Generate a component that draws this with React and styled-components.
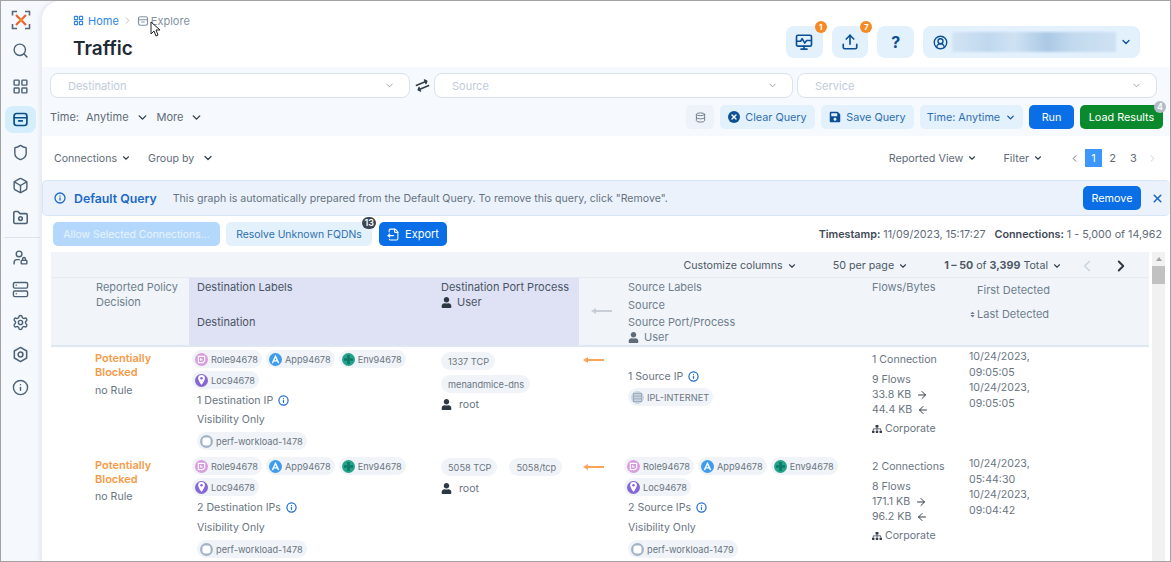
import React from 'react';
import styled, { createGlobalStyle } from 'styled-components';
import {
    Search, LayoutGrid, Shield, Box, Server, Settings, Info, ChevronDown, ChevronLeft, ChevronRight,
    Upload, CircleUserRound, Database, X, FileOutput, ArrowLeft, ArrowRight, UserLock,
} from 'lucide-react';
import { FaSave, FaExchangeAlt, FaUser, FaSitemap, FaSort } from 'react-icons/fa';

const Global = createGlobalStyle`
    html, body { margin: 0; padding: 0; background: #fff; }
    body { font-family: Inter, "Noto Sans", sans-serif; font-size: 11px; color: #5f6b78; }
    * { box-sizing: border-box; }
`

const Frame = styled.div`
    position: relative;
    width: 1171px;
    height: 562px;
    display: flex;
    overflow: hidden;
    border: 1px solid #a3a3a3;
    background: #f5f8fc;
`

const Sidebar = styled.nav`
    width: 41px;
    flex: none;
    display: flex;
    flex-direction: column;
    align-items: center;
    padding-top: 5px;
    color: #4d6276;
`

const NavItem = styled.div`
    width: 31px;
    height: 27px;
    margin-bottom: ${p => p.$gap || 5.5}px;
    margin-left: -2px;
    display: flex;
    align-items: center;
    justify-content: center;
    border-radius: 8px;
    background: ${p => p.$active ? '#d5eefb' : 'transparent'};
    color: ${p => p.$active ? '#0d4f86' : 'inherit'};
`

const NavDivider = styled.div`
    width: 36px;
    height: 1px;
    background: #dde3ea;
    margin: 0 0 6px;
`

const Main = styled.main`
    flex: 1;
    min-width: 0;
    background: #fff;
    border-top-left-radius: 18px;
    box-shadow: -2px 0 4px rgba(70, 90, 120, 0.1);
    display: flex;
    flex-direction: column;
`

const Header = styled.header`
    height: 66px;
    flex: none;
    display: flex;
    justify-content: space-between;
    padding: 12px 30px 0 31px;
`

const Crumbs = styled.div`
    display: flex;
    align-items: center;
    font-size: 11px;
    height: 15px;
    color: #7b8896;
`

const CrumbLink = styled.span`
    display: flex;
    align-items: center;
    gap: ${p => p.$link ? 4 : 2}px;
    color: ${p => p.$link ? '#2f84e6' : '#8592a0'};
`

const Title = styled.h1`
    margin: 9px 0 0 0;
    font-size: 19px;
    line-height: 24px;
    font-weight: 600;
    color: #1f2a36;
`

const TopActions = styled.div`
    display: flex;
    gap: 9px;
    margin-top: 13px;
    height: 32px;
    color: #0d4f96;
`

const TopButton = styled.div`
    position: relative;
    width: 36.7px;
    height: 32px;
    display: flex;
    align-items: center;
    justify-content: center;
    background: #e3f1fd;
    border-radius: 8px;
    font-size: 16px;
    font-weight: 700;
`

const CountBadge = styled.span`
    position: absolute;
    top: -5px;
    right: -4px;
    width: 12px;
    height: 12px;
    border-radius: 50%;
    background: #f58a25;
    color: #fff;
    font-size: 8px;
    font-weight: 700;
    line-height: 12px;
    text-align: center;
`

const UserButton = styled(TopButton)`
    width: 217px;
    justify-content: flex-start;
    padding-left: 10px;
    gap: 4px;
`

const BlurName = styled.div`
    width: 164px;
    height: 20px;
    background: linear-gradient(90deg, #d2e4f4, #c0d8ee 22%, #cfe2f3 38%, #abc9e5 58%, #c2daee 74%, #cfe2f3);
    filter: blur(0.8px);
`

const FilterPanel = styled.section`
    height: 69px;
    flex: none;
    background: #f6f9fd;
    padding: 6px 7px 0 8px;
`

const QueryRow = styled.div`
    display: flex;
    align-items: center;
`

const SelectBox = styled.div`
    width: ${p => p.$width}px;
    height: 25px;
    display: flex;
    align-items: center;
    justify-content: space-between;
    padding: 0 14px 0 17px;
    background: #fff;
    border: 1px solid #d8e2ef;
    border-radius: 8px;
    color: #bfcbdb;
    font-size: 11px;
`

const Swap = styled.div`
    width: 24px;
    display: flex;
    justify-content: center;
    color: #33404d;
    svg { transform: rotate(-22deg); }
`

const ControlRow = styled.div`
    display: flex;
    align-items: center;
    justify-content: space-between;
    height: 24px;
    margin-top: 7px;
`

const TimeMenu = styled.div`
    display: flex;
    align-items: center;
    color: #5f6b78;
    font-size: 11px;
`

const MenuItem = styled.span`
    display: flex;
    align-items: center;
    gap: ${p => p.$gap || 4}px;
    margin-left: ${p => p.$left || 0}px;
    svg { color: #33404d; }
`

const Buttons = styled.div`
    display: flex;
    gap: 6px;
`

const Button = styled.button`
    position: relative;
    height: 24px;
    width: ${p => p.$width}px;
    display: inline-flex;
    align-items: center;
    justify-content: center;
    gap: 5px;
    padding: 0;
    border: 0;
    border-radius: 5px;
    font: inherit;
    font-size: ${p => p.$size || 10.8}px;
    background: ${p => ({ primary: '#0a6fe6', green: '#0b8a2d', disabled: '#b4d8fb', muted: '#eef3fa' })[p.$kind] || '#e3f1fd'};
    color: ${p => ({ primary: '#fff', green: '#fff', disabled: '#e8f3fe', muted: '#6b7683' })[p.$kind] || '#2f6fad'};
`

const ButtonBadge = styled.span`
    position: absolute;
    top: ${p => p.$top}px;
    right: ${p => p.$right}px;
    min-width: ${p => p.$size}px;
    height: ${p => p.$size}px;
    padding: 0 2px;
    border-radius: 8px;
    background: ${p => p.$bg};
    color: #fff;
    font-size: 9px;
    font-weight: 600;
    line-height: ${p => p.$size}px;
    text-align: center;
`

const RoundX = styled.span`
    width: 12px;
    height: 12px;
    display: flex;
    align-items: center;
    justify-content: center;
    border-radius: 50%;
    background: #0d4f96;
    color: #fff;
`

const Toolbar = styled.div`
    height: 44px;
    flex: none;
    display: flex;
    align-items: center;
    justify-content: space-between;
    padding: 0 12px 0 12px;
`

const ToolGroup = styled.div`
    display: flex;
    align-items: center;
    font-size: ${p => p.$size || 11}px;
`

const Pager = styled.div`
    display: flex;
    align-items: center;
    margin-left: 26px;
    color: #5f6b78;
`

const PageNum = styled.span`
    width: 17px;
    height: 18px;
    margin-right: ${p => p.$right || 0}px;
    display: flex;
    align-items: center;
    justify-content: center;
    font-size: 11px;
    background: ${p => p.$active ? '#3d97fb' : 'transparent'};
    color: ${p => p.$active ? '#fff' : '#5f6b78'};
`

const Banner = styled.div`
    height: 36px;
    flex: none;
    display: flex;
    align-items: center;
    padding: 0 6px 0 11px;
    background: #ecf2fc;
    border: 1px solid #d6e6f6;
    border-right: 0;
    border-radius: 5px;
    font-size: 10.6px;
    color: #66727f;
`

const BannerTitle = styled.strong`
    margin: 0 16px 0 8px;
    font-size: 12.3px;
    font-weight: 600;
    color: #1b6ac9;
`

const BannerClose = styled.span`
    display: flex;
    margin-left: 10px;
    color: #1b6ac9;
`

const ActionRow = styled.div`
    height: 24px;
    flex: none;
    margin-top: 6px;
    display: flex;
    align-items: center;
    justify-content: space-between;
    padding: 0 8px 0 11px;
`

const Meta = styled.div`
    display: flex;
    gap: 9px;
    font-size: 10.75px;
    color: #5f6b78;
    b { font-weight: 600; color: #3f4a57; }
`

const TableArea = styled.div`
    margin: 6px 0 0 9px;
    flex: 1;
    min-height: 0;
    display: flex;
`

const TableBox = styled.div`
    width: 1098px;
    flex: none;
`

const Scrollbar = styled.div`
    width: 13px;
    margin-left: 3px;
    display: flex;
    flex-direction: column;
    align-items: center;
    background: #f1f1f1;
`

const ScrollArrow = styled.div`
    margin-top: 5px;
    border: 3px solid transparent;
    border-top: 0;
    border-bottom: 4px solid #a3a3a3;
`

const ScrollThumb = styled.div`
    width: 100%;
    height: 18px;
    margin-top: 5px;
    background: #c1c1c1;
`

const TableTools = styled.div`
    height: 26px;
    display: flex;
    align-items: center;
    justify-content: flex-end;
    padding: 2px 19px 0 0;
    background: #f1f5f9;
    border-bottom: 1px solid #e6ebf0;
    font-size: 10.7px;
    color: #4d5865;
    b { font-weight: 700; }
`

const Columns = styled.div`
    display: grid;
    grid-template-columns: 138px 248px 142px 45px 244px 97px 1fr;
`

const HeadRow = styled(Columns)`
    height: 69px;
    background: #f1f5f9;
    border-bottom: 2px solid #dfe7f0;
    color: #6f7d8c;
`

const HeadCell = styled.div`
    padding: ${p => p.$top ?? 2}px 0 0 ${p => p.$left ?? 8}px;
    background: ${p => p.$hi ? '#dfe1f5' : 'transparent'};
    color: ${p => p.$hi ? '#4a5563' : 'inherit'};
    line-height: 15px;
`

const HeadLine = styled.div`
    margin-top: ${p => p.$gap || 0}px;
    display: flex;
    align-items: center;
    gap: ${p => p.$icon || 5}px;
`

const Row = styled(Columns)`
    height: ${p => p.$height}px;
    font-size: 10.6px;
    line-height: 15px;
`

const Cell = styled.div`
    padding: ${p => p.$top ?? 3}px 0 0 ${p => p.$left ?? 4}px;
`

const Policy = styled.div`
    font-size: 11px;
    font-weight: 600;
    line-height: 14px;
    color: #f79a47;
`

const Muted = styled.div`
    margin-top: ${p => p.$gap || 0}px;
    margin-left: ${p => p.$left || 0}px;
    display: flex;
    align-items: center;
    gap: 5px;
    color: #6a7582;
    white-space: nowrap;
`

const ChipWrap = styled.div`
    display: flex;
    flex-wrap: wrap;
    gap: ${p => p.$gap ?? 3}px ${p => p.$gap ?? 4}px;
    margin-top: ${p => p.$gap2 || 0}px;
    margin-left: ${p => p.$left || 0}px;
`

const ChipEl = styled.span`
    height: 18px;
    display: inline-flex;
    align-items: center;
    gap: 3px;
    padding: 0 ${p => p.$hasIcon ? 4 : 6}px 0 ${p => p.$hasIcon ? 3 : 7}px;
    border-radius: 9px;
    background: #f0f3f7;
    font-size: 9.2px;
    color: #6a7582;
    white-space: nowrap;
`

const LabelDot = styled.span`
    width: 13px;
    height: 13px;
    flex: none;
    display: flex;
    align-items: center;
    justify-content: center;
    border-radius: 50%;
    background: ${p => p.$color};
`

const InfoIcon = styled(Info)`
    color: #1b6ac9;
`

const ArrowCell = styled.div`
    padding: ${p => p.$top}px 0 0 ${p => p.$left ?? 4}px;
    color: ${p => p.$color};
`

const TimeCell = styled.div`
    padding: 2px 0 0 4px;
    line-height: 15.5px;
    color: #6a7582;
`

const Pointer = styled.svg`
    position: absolute;
    left: 149px;
    top: 20px;
`

const LongArrow = () => (
    <svg width="21" height="8" viewBox="0 0 21 8" style={{ display: 'block' }}>
        <path d="M0 4l5-3v2h16v2H5v2z" fill="currentColor" />
    </svg>
)

const ExploreIcon = ({ size }) => (
    <svg width={size} height={size} viewBox="0 0 24 24" fill="none" stroke="currentColor" strokeWidth="2.4" strokeLinecap="round">
        <rect x="3" y="3.5" width="18" height="17" rx="3.5" />
        <path d="M3 9.5h18M9.5 14h5" />
    </svg>
)

const Logo = () => (
    <svg width="20" height="20" viewBox="0 0 20 20" fill="none">
        <path d="M6 1.500H1.500v4M14 1.500h4.500v4M1.500 14v4.500H6M18.500 14v4.500H14" stroke="#5a6672" strokeWidth="1.6" />
        <path d="M5 5l10 10M15 5L5 15" stroke="#f2602e" strokeWidth="2.2" />
        <circle cx="10" cy="10" r="2" fill="#f58a25" />
    </svg>
)

const FolderIcon = () => (
    <svg width="17" height="17" viewBox="0 0 24 24" fill="none" stroke="currentColor" strokeWidth="2.2" strokeLinejoin="round">
        <path d="M2.500 5.500a2 2 0 0 1 2-2h4l2.500 3h8.500a2 2 0 0 1 2 2v10a2 2 0 0 1-2 2h-15a2 2 0 0 1-2-2z" />
        <circle cx="12" cy="13.500" r="2.600" />
    </svg>
)

const HexGear = () => (
    <svg width="17" height="17" viewBox="0 0 24 24" fill="none" stroke="currentColor" strokeWidth="2.2" strokeLinejoin="round">
        <path d="M12 2l8.700 5v10L12 22l-8.700-5V7z" />
        <circle cx="12" cy="12" r="3.400" />
    </svg>
)

const MonitorIcon = () => (
    <svg width="18" height="18" viewBox="0 0 24 24" fill="none" stroke="currentColor" strokeWidth="2.2" strokeLinecap="round" strokeLinejoin="round">
        <rect x="2" y="3" width="20" height="14.500" rx="2" />
        <path d="M2.500 11h5l2-3.500 3.500 6 2.500-3.500h6M8 21.500h8M12 17.500v4" />
    </svg>
)

const dotGlyph = {
    role: <svg width="9" height="9" viewBox="0 0 10 10" fill="none" stroke="#fff" strokeWidth="1.3"><path d="M1.500 1.500h7v5l-2 2h-5z" /><path d="M4 3.500v2h2" /></svg>,
    app: <svg width="9" height="9" viewBox="0 0 10 10" fill="none" stroke="#fff" strokeWidth="1.5"><path d="M1.500 9L5 1.500 8.500 9M3 6.500h4" /></svg>,
    env: <svg width="9" height="9" viewBox="0 0 10 10" fill="#0d7a68"><path d="M3.500 0h3v3.500H10v3H6.500V10h-3V6.500H0v-3h3.500z" /></svg>,
    loc: <svg width="9" height="10" viewBox="0 0 10 12" fill="#fff"><path d="M5 0a4 4 0 0 1 4 4c0 3-4 8-4 8S1 7 1 4a4 4 0 0 1 4-4z" /><circle cx="5" cy="4" r="1.500" fill="#8767d6" /></svg>,
    workload: <svg width="9" height="9" viewBox="0 0 10 10"><rect x="0.500" y="0.500" width="9" height="9" rx="3" fill="#fff" /></svg>,
    ipl: <svg width="9" height="9" viewBox="0 0 10 10" fill="none" stroke="#98a9bd" strokeWidth="1"><rect x="0.500" y="0.500" width="9" height="9" /><path d="M0 3.500h10M0 6.500h10" /></svg>,
}

const dotColor = {
    role: '#d99be0',
    app: '#3d9bf0',
    env: '#23a38c',
    loc: '#8767d6',
    workload: '#a2b3c6',
    ipl: '#c9d4e0',
}

const Chip = ({ kind, children }) => (
    <ChipEl $hasIcon={!!kind}>
        {kind && <LabelDot $color={dotColor[kind]}>{dotGlyph[kind]}</LabelDot>}
        {children}
    </ChipEl>
)

const Labels = () => (
    <ChipWrap style={{ width: 225 }}>
        <Chip kind="role">Role94678</Chip>
        <Chip kind="app">App94678</Chip>
        <Chip kind="env">Env94678</Chip>
        <Chip kind="loc">Loc94678</Chip>
    </ChipWrap>
)

const Bytes = ({ flows, out, back, connections }) => (
    <Cell $top={5} $left={4}>
        <Muted>{connections}</Muted>
        <Muted $gap={5}>{flows}</Muted>
        <Muted>{out} <ArrowRight size={12} color="#333d48" /></Muted>
        <Muted>{back} <ArrowLeft size={12} color="#333d48" /></Muted>
        <Muted $gap={4}><FaSitemap size={10} color="#333d48" style={{ marginRight: -2 }} />Corporate</Muted>
    </Cell>
)

const navIcon = { size: 17, strokeWidth: 2 };

const App = () => {
    return (
        <Frame>
            <Global />
            <Sidebar>
                <NavItem $gap={4}><Logo /></NavItem>
                <NavItem $gap={9}><Search {...navIcon} /></NavItem>
                <NavItem $gap={6}><LayoutGrid {...navIcon} /></NavItem>
                <NavItem $active $gap={6}><ExploreIcon size={17} /></NavItem>
                <NavItem $gap={6}><Shield {...navIcon} /></NavItem>
                <NavItem $gap={5}><Box {...navIcon} /></NavItem>
                <NavItem $gap={6}><FolderIcon /></NavItem>
                <NavDivider />
                <NavItem $gap={5}><UserLock {...navIcon} /></NavItem>
                <NavItem><Server {...navIcon} /></NavItem>
                <NavItem><Settings {...navIcon} /></NavItem>
                <NavItem><HexGear /></NavItem>
                <NavItem><Info {...navIcon} /></NavItem>
            </Sidebar>
            <Main>
                <Header>
                    <div>
                        <Crumbs>
                            <CrumbLink $link><LayoutGrid size={11} strokeWidth={2.4} />Home</CrumbLink>
                            <ChevronRight size={11} color="#b6bfc9" style={{ margin: '0 4px 0 3px' }} />
                            <CrumbLink><ExploreIcon size={12} />Explore</CrumbLink>
                        </Crumbs>
                        <Title>Traffic</Title>
                    </div>
                    <TopActions>
                        <TopButton><MonitorIcon /><CountBadge>1</CountBadge></TopButton>
                        <TopButton><Upload size={18} strokeWidth={2.2} /><CountBadge>7</CountBadge></TopButton>
                        <TopButton>?</TopButton>
                        <UserButton>
                            <CircleUserRound size={15} strokeWidth={2.2} />
                            <BlurName />
                            <ChevronDown size={12} strokeWidth={2.6} />
                        </UserButton>
                    </TopActions>
                </Header>

                <FilterPanel>
                    <QueryRow>
                        <SelectBox $width={360}>Destination<ChevronDown size={11} color="#8f9cab" /></SelectBox>
                        <Swap><FaExchangeAlt size={13} /></Swap>
                        <SelectBox $width={359}>Source<ChevronDown size={11} color="#8f9cab" /></SelectBox>
                        <SelectBox $width={360} style={{ marginLeft: 4 }}>Service<ChevronDown size={11} color="#8f9cab" /></SelectBox>
                    </QueryRow>
                    <ControlRow>
                        <TimeMenu>
                            <span>Time:</span>
                            <MenuItem $left={7} $gap={7}>Anytime<ChevronDown size={13} strokeWidth={2.6} /></MenuItem>
                            <MenuItem $left={8} $gap={7}>More<ChevronDown size={13} strokeWidth={2.6} /></MenuItem>
                        </TimeMenu>
                        <Buttons>
                            <Button $kind="muted" $width={28}><Database size={11} /></Button>
                            <Button $width={95}><RoundX><X size={8} strokeWidth={4} /></RoundX>Clear Query</Button>
                            <Button $width={93}><FaSave size={12} color="#0d4f96" />Save Query</Button>
                            <Button $width={103}>Time: Anytime<ChevronDown size={11} strokeWidth={2.6} color="#0d4f96" /></Button>
                            <Button $kind="primary" $width={45}>Run</Button>
                            <Button $kind="green" $width={83}>
                                Load Results
                                <ButtonBadge $top={-4} $right={-3} $size={12} $bg="#b3bcc6">4</ButtonBadge>
                            </Button>
                        </Buttons>
                    </ControlRow>
                </FilterPanel>

                <Toolbar>
                    <ToolGroup $size={10.6}>
                        <MenuItem>Connections<ChevronDown size={10} strokeWidth={2.6} /></MenuItem>
                        <MenuItem $left={17} $gap={8}>Group by<ChevronDown size={12} strokeWidth={2.6} /></MenuItem>
                    </ToolGroup>
                    <ToolGroup $size={10.8}>
                        <MenuItem>Reported View<ChevronDown size={10} strokeWidth={2.6} /></MenuItem>
                        <MenuItem $left={26}>Filter<ChevronDown size={10} strokeWidth={2.6} /></MenuItem>
                        <Pager>
                            <ChevronLeft size={11} style={{ marginRight: 5 }} />
                            <PageNum $active $right={2}>1</PageNum>
                            <PageNum $right={4}>2</PageNum>
                            <PageNum>3</PageNum>
                            <ChevronRight size={11} color="#c2c9d2" style={{ marginLeft: 5 }} />
                        </Pager>
                    </ToolGroup>
                </Toolbar>

                <Banner>
                    <Info size={12} strokeWidth={2.6} color="#1b6ac9" />
                    <BannerTitle>Default Query</BannerTitle>
                    <span>This graph is automatically prepared from the Default Query. To remove this query, click "Remove".</span>
                    <Button $kind="primary" $width={58} style={{ marginLeft: 'auto' }}>Remove</Button>
                    <BannerClose><X size={13} strokeWidth={3} /></BannerClose>
                </Banner>

                <ActionRow>
                    <Buttons>
                        <Button $kind="disabled" $width={167} $size={10.4}>Allow Selected Connections...</Button>
                        <Button $width={146} $size={10.4}>
                            Resolve Unknown FQDNs
                            <ButtonBadge $top={-5} $right={-4} $size={12} $bg="#3a4653">13</ButtonBadge>
                        </Button>
                        <Button $kind="primary" $width={68} $size={11} style={{ marginLeft: 1 }}><FileOutput size={13} />Export</Button>
                    </Buttons>
                    <Meta>
                        <span><b>Timestamp:</b> 11/09/2023, 15:17:27</span>
                        <span><b>Connections:</b> 1 - 5,000 of 14,962</span>
                    </Meta>
                </ActionRow>

                <TableArea>
                    <TableBox>
                        <TableTools>
                            <MenuItem>Customize columns<ChevronDown size={10} strokeWidth={2.6} /></MenuItem>
                            <MenuItem $left={36}>50 per page<ChevronDown size={10} strokeWidth={2.6} /></MenuItem>
                            <MenuItem $left={36}>
                                <span><b>1 – 50</b> of <b>3,399</b> Total</span>
                                <ChevronDown size={10} strokeWidth={2.6} />
                            </MenuItem>
                            <ChevronLeft size={18} color="#c9d3de" style={{ marginLeft: 16 }} />
                            <ChevronRight size={18} color="#2e3843" strokeWidth={2.6} style={{ marginLeft: 16 }} />
                        </TableTools>
                        <HeadRow>
                            <HeadCell $left={45}>
                                <HeadLine>Reported Policy</HeadLine>
                                <HeadLine>Decision</HeadLine>
                            </HeadCell>
                            <HeadCell $hi>
                                <HeadLine>Destination Labels</HeadLine>
                                <HeadLine $gap={20}>Destination</HeadLine>
                            </HeadCell>
                            <HeadCell $hi $left={4}>
                                <HeadLine>Destination Port Process</HeadLine>
                                <HeadLine><FaUser size={11} color="#2e3843" />User</HeadLine>
                            </HeadCell>
                            <ArrowCell $top={29} $left={12} $color="#c7ced6"><LongArrow /></ArrowCell>
                            <HeadCell $left={4}>
                                <HeadLine>Source Labels</HeadLine>
                                <HeadLine $gap={3}>Source</HeadLine>
                                <HeadLine $gap={2}>Source Port/Process</HeadLine>
                                <HeadLine><FaUser size={11} color="#5f6b78" />User</HeadLine>
                            </HeadCell>
                            <HeadCell $left={4}><HeadLine>Flows/Bytes</HeadLine></HeadCell>
                            <HeadCell $top={5} $left={12}>
                                <HeadLine>First Detected</HeadLine>
                                <HeadLine $gap={9} $icon={1} style={{ marginLeft: -8 }}><FaSort size={7} />Last Detected</HeadLine>
                            </HeadCell>
                        </HeadRow>

                        <Row $height={107}>
                            <Cell $top={4} $left={44}>
                                <Policy>Potentially<br />Blocked</Policy>
                                <Muted $gap={4}>no Rule</Muted>
                            </Cell>
                            <Cell $left={3}>
                                <Labels />
                                <Muted $gap={4} $left={5}>1 Destination IP <InfoIcon size={11} strokeWidth={2.6} /></Muted>
                                <Muted $gap={4} $left={5}>Visibility Only</Muted>
                                <ChipWrap $gap2={5} $left={5}><Chip kind="workload">perf-workload-1478</Chip></ChipWrap>
                            </Cell>
                            <Cell $top={5}>
                                <ChipWrap $gap={5}><Chip>1337 TCP</Chip><Chip>menandmice-dns</Chip></ChipWrap>
                                <Muted $gap={4}><FaUser size={11} color="#2e3843" style={{ marginRight: 2 }} />root</Muted>
                            </Cell>
                            <ArrowCell $top={9} $color="#f9a45a"><LongArrow /></ArrowCell>
                            <Cell $top={22} $left={0}>
                                <Muted $left={4}>1 Source IP <InfoIcon size={11} strokeWidth={2.6} /></Muted>
                                <ChipWrap $gap2={4} $left={4}><Chip kind="ipl">IPL-INTERNET</Chip></ChipWrap>
                            </Cell>
                            <Bytes connections="1 Connection" flows="9 Flows" out="33.8 KB" back="44.4 KB" />
                            <TimeCell>10/24/2023,<br />09:05:05<br />10/24/2023,<br />09:05:05</TimeCell>
                        </Row>

                        <Row $height={107}>
                            <Cell $top={4} $left={44}>
                                <Policy>Potentially<br />Blocked</Policy>
                                <Muted $gap={3}>no Rule</Muted>
                            </Cell>
                            <Cell $left={3}>
                                <Labels />
                                <Muted $gap={4} $left={5}>2 Destination IPs <InfoIcon size={11} strokeWidth={2.6} /></Muted>
                                <Muted $gap={5} $left={5}>Visibility Only</Muted>
                                <ChipWrap $gap2={5} $left={5}><Chip kind="workload">perf-workload-1478</Chip></ChipWrap>
                            </Cell>
                            <Cell $top={4}>
                                <ChipWrap $gap={12}><Chip>5058 TCP</Chip><Chip>5058/tcp</Chip></ChipWrap>
                                <Muted $gap={5}><FaUser size={11} color="#2e3843" style={{ marginRight: 2 }} />root</Muted>
                            </Cell>
                            <ArrowCell $top={9} $color="#f9a45a"><LongArrow /></ArrowCell>
                            <Cell $left={0}>
                                <Labels />
                                <Muted $gap={4} $left={4}>2 Source IPs <InfoIcon size={11} strokeWidth={2.6} /></Muted>
                                <Muted $gap={5} $left={4}>Visibility Only</Muted>
                                <ChipWrap $gap2={5} $left={4}><Chip kind="workload">perf-workload-1479</Chip></ChipWrap>
                            </Cell>
                            <Bytes connections="2 Connections" flows="8 Flows" out="171.1 KB" back="96.2 KB" />
                            <TimeCell>10/24/2023,<br />05:44:30<br />10/24/2023,<br />09:04:42</TimeCell>
                        </Row>
                    </TableBox>
                    <Scrollbar>
                        <ScrollArrow />
                        <ScrollThumb />
                    </Scrollbar>
                </TableArea>
            </Main>
            <Pointer width="11" height="16" viewBox="0 0 11 16">
                <path d="M1 1v12l3-3 2 5 2-1-2-5h4z" fill="#fff" stroke="#222" strokeWidth="1" />
            </Pointer>
        </Frame>
    )
}

export default App;
